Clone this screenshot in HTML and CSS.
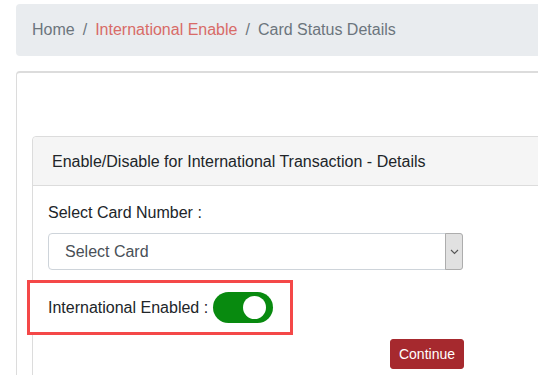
FILE: index.html
```html
<!DOCTYPE html>
<html lang="en">
<head>
<meta charset="utf-8">
<title>Card Status Details</title>
<link rel="stylesheet" href="styles.css">
</head>
<body>
<div class="page">
  <nav class="breadcrumb">
    <span class="crumb">Home</span>
    <span class="sep">/</span>
    <a class="crumb link" href="#">International Enable</a>
    <span class="sep">/</span>
    <span class="crumb">Card Status Details</span>
  </nav>

  <div class="outer-card">
    <div class="inner-card">
      <div class="card-header">Enable/Disable for International Transaction - Details</div>
      <div class="card-body">
        <div class="form-col">
          <label class="field-label">Select Card Number :</label>
          <div class="select">
            <span class="select-text">Select Card</span>
            <span class="select-btn">
              <svg width="9" height="6" viewBox="0 0 9 6"><path d="M1 1 L4.5 4.5 L8 1" fill="none" stroke="#555" stroke-width="1.1"/></svg>
            </span>
          </div>
          <div class="highlight">
            <span class="switch-label">International Enabled :</span>
            <span class="switch"><span class="knob"></span></span>
          </div>
          <div class="actions">
            <button class="btn-continue">Continue</button>
          </div>
        </div>
      </div>
    </div>
  </div>
</div>
</body>
</html>
```

FILE: styles.css
```css
html, body {
  margin: 0;
  padding: 0;
  background: #fff;
  overflow: hidden;
}
body {
  font-family: "Liberation Sans", Arial, sans-serif;
  font-size: 16px;
  color: #212529;
}
.page {
  padding: 4px 0 0 16px;
  width: 620px;
}
.breadcrumb {
  display: flex;
  align-items: center;
  background: #e9ecef;
  border-radius: 4px;
  padding: 14px 16px;
  line-height: 24px;
  color: #6c757d;
}
.crumb { color: #6c757d; text-decoration: none; }
.crumb.link { color: #d86b67; }
.sep { padding: 0 8px; color: #6c757d; }

.outer-card {
  margin-top: 15px;
  border: 1px solid #dcdcdc;
  border-top-width: 2px;
  border-radius: 4px;
  padding: 63px 0 0 15px;
  height: 400px;
}
.inner-card {
  border: 1px solid #dcdcdc;
  border-radius: 4px;
  height: 360px;
}
.card-header {
  background: #f5f5f5;
  border-bottom: 1px solid #dcdcdc;
  padding: 13px 19px 11px;
  line-height: 24px;
  border-radius: 4px 4px 0 0;
}
.card-body {
  padding: 15px 15px;
}
.form-col {
  width: 416px;
}
.field-label {
  display: block;
  line-height: 24px;
  margin-bottom: 8px;
}
.select {
  display: flex;
  height: 37px;
  box-sizing: border-box;
  width: 415px;
  border: 1px solid #ced4da;
  border-radius: 4px;
  background: #fff;
}
.select-text {
  flex: 1;
  padding-left: 16px;
  line-height: 36px;
  color: #495057;
}
.select-btn {
  width: 16px;
  margin: -1px -1px -1px 0;
  background: #e1e1e1;
  border: 1px solid #adadad;
  border-radius: 0 3px 3px 0;
  display: flex;
  align-items: center;
  justify-content: center;
}
.highlight {
  display: flex;
  align-items: center;
  margin: 10px 0 0 -21px;
  width: 266px;
  box-sizing: border-box;
  height: 55px;
  border: 3px solid #f44848;
  background: #fff;
  padding-left: 18px;
  position: relative;
}
.switch-label {
  line-height: 24px;
  margin-right: 5px;
}
.switch {
  width: 60px;
  height: 31px;
  border-radius: 16px;
  background: #088a0f;
  display: flex;
  align-items: center;
  justify-content: flex-end;
  padding-right: 7px;
  box-sizing: border-box;
}
.knob {
  width: 23px;
  height: 23px;
  border-radius: 50%;
  background: #fff;
}
.actions {
  display: flex;
  justify-content: flex-end;
  margin-top: 4px;
}
.btn-continue {
  font-family: "Liberation Sans", Arial, sans-serif;
  font-size: 14px;
  color: #fff;
  background: #a6292e;
  border: 1px solid #a6292e;
  border-radius: 3px;
  height: 30px;
  padding: 0 8px;
  line-height: 28px;
}
```
